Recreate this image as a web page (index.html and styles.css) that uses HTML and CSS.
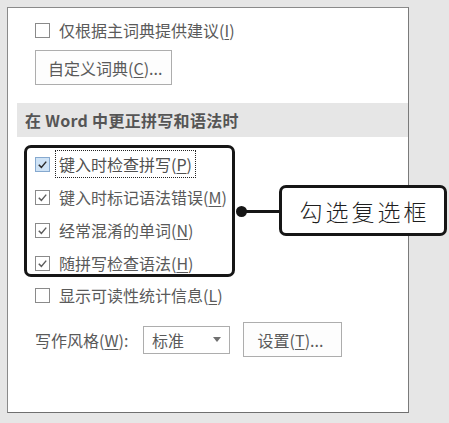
FILE: index.html
```html
<!DOCTYPE html>
<html lang="zh-CN">
<head>
<meta charset="utf-8">
<title>校对选项</title>
<link rel="stylesheet" href="styles.css">
</head>
<body>
<div class="panel">
  <div class="row row-first">
    <span class="cb"></span>
    <span class="txt">仅根据主词典提供建议(<u>I</u>)</span>
  </div>
  <div class="btn btn-dict">自定义词典(<u>C</u>)...</div>
  <div class="section">在 Word 中更正拼写和语法时</div>
  <div class="annot">
    <div class="row">
      <span class="cb checked focus-cb"><svg viewBox="0 0 15 15"><polyline points="3.2,7.8 6.2,10.8 11.8,4.2"/></svg></span>
      <span class="txt focus">键入时检查拼写(<u>P</u>)</span>
    </div>
    <div class="row">
      <span class="cb checked"><svg viewBox="0 0 15 15"><polyline points="3.2,7.8 6.2,10.8 11.8,4.2"/></svg></span>
      <span class="txt">键入时标记语法错误(<u>M</u>)</span>
    </div>
    <div class="row">
      <span class="cb checked"><svg viewBox="0 0 15 15"><polyline points="3.2,7.8 6.2,10.8 11.8,4.2"/></svg></span>
      <span class="txt">经常混淆的单词(<u>N</u>)</span>
    </div>
    <div class="row">
      <span class="cb checked"><svg viewBox="0 0 15 15"><polyline points="3.2,7.8 6.2,10.8 11.8,4.2"/></svg></span>
      <span class="txt">随拼写检查语法(<u>H</u>)</span>
    </div>
  </div>
  <div class="row row-read">
    <span class="cb"></span>
    <span class="txt">显示可读性统计信息(<u>L</u>)</span>
  </div>
  <div class="style-row">
    <span class="style-label">写作风格(<u>W</u>):</span>
    <div class="select"><span>标准</span><span class="arrow"></span></div>
    <div class="btn btn-set">设置(<u>T</u>)...</div>
  </div>
</div>
<div class="callout-dot"></div>
<div class="callout-line"></div>
<div class="callout">勾选复选框</div>
</body>
</html>
```
FILE: styles.css
```css
html, body {
  margin: 0;
  padding: 0;
}
body {
  width: 449px;
  height: 423px;
  background: #e6e6e6;
  position: relative;
  overflow: hidden;
  font-family: "Noto Sans CJK SC", "Noto Sans", sans-serif;
  font-size: 16px;
  color: #5a5a5a;
}
u {
  text-decoration: underline;
  text-underline-offset: 2px;
  text-decoration-thickness: 1px;
}
.panel {
  margin: 7px 0 0 7px;
  width: 400px;
  height: 404px;
  border: 1px solid #8a8a8a;
  border-bottom-color: #6f6f6f;
  border-right-color: #7a7a7a;
  background: #fff;
  display: flex;
  flex-direction: column;
  align-items: flex-start;
}
.row {
  display: flex;
  align-items: center;
  height: 22px;
  line-height: 22px;
  white-space: nowrap;
}
.row-first {
  margin-top: 11px;
  padding-left: 27px;
}
.cb {
  width: 15px;
  height: 15px;
  box-sizing: border-box;
  border: 1px solid #8a8a8a;
  background: #fff;
  margin-right: 9px;
  flex: none;
  display: flex;
}
.cb svg {
  width: 13px;
  height: 13px;
  fill: none;
  stroke: #5c5c5c;
  stroke-width: 1.7;
}
.cb.focus-cb {
  background: #cfe3f6;
  border-color: #86a9cf;
}
.cb.focus-cb svg {
  stroke: #2a2a2a;
}
.txt.focus {
  outline: 1px dotted #222;
  outline-offset: 2px;
  padding: 0 1px;
  margin-left: -1px;
  color: #505050;
}
.btn {
  box-sizing: border-box;
  border: 1px solid #adadad;
  background: #fdfdfd;
  display: flex;
  align-items: center;
  white-space: nowrap;
}
.btn-dict {
  margin: 9px 0 0 27px;
  width: 137px;
  height: 35px;
  padding-left: 12px;
}
.section {
  margin: 18px 0 0 9px;
  align-self: stretch;
  height: 34px;
  line-height: 34px;
  background: #e6e6e6;
  padding-left: 8px;
  font-weight: bold;
  font-size: 16px;
  letter-spacing: 0.3px;
  color: #555;
}
.annot {
  margin: 8px 0 0 16px;
  width: 197px;
  box-sizing: content-box;
  border: 3px solid #161616;
  border-radius: 7px;
  padding: 5px 0 0 8px;
  height: 121px;
  display: flex;
  flex-direction: column;
  gap: 11px;
}
.row-read {
  margin-top: 7px;
  padding-left: 27px;
}
.style-row {
  margin-top: 16px;
  padding-left: 27px;
  display: flex;
  align-items: center;
  height: 35px;
  white-space: nowrap;
}
.style-label {
  width: 108px;
  flex: none;
}
.select {
  width: 87px;
  height: 28px;
  box-sizing: border-box;
  border: 1px solid #adadad;
  background: #fff;
  display: flex;
  align-items: center;
  justify-content: space-between;
  padding: 0 8px 0 8px;
}
.arrow {
  width: 0;
  height: 0;
  border-left: 4px solid transparent;
  border-right: 4px solid transparent;
  border-top: 5px solid #707070;
}
.btn-set {
  margin-left: 13px;
  width: 99px;
  height: 35px;
  justify-content: center;
  padding-right: 4px;
}
.callout-dot {
  position: absolute;
  left: 236px;
  top: 206px;
  width: 11px;
  height: 11px;
  border-radius: 50%;
  background: #161616;
}
.callout-line {
  position: absolute;
  left: 241px;
  top: 210px;
  width: 39px;
  height: 3px;
  background: #161616;
}
.callout {
  position: absolute;
  left: 279px;
  top: 185px;
  width: 168px;
  height: 51px;
  box-sizing: border-box;
  border: 3px solid #161616;
  border-radius: 7px;
  background: #fff;
  display: flex;
  align-items: center;
  justify-content: center;
  font-size: 23px;
  font-weight: 300;
  letter-spacing: 3px;
  padding-left: 3px;
  color: #1e1e1e;
}
```
